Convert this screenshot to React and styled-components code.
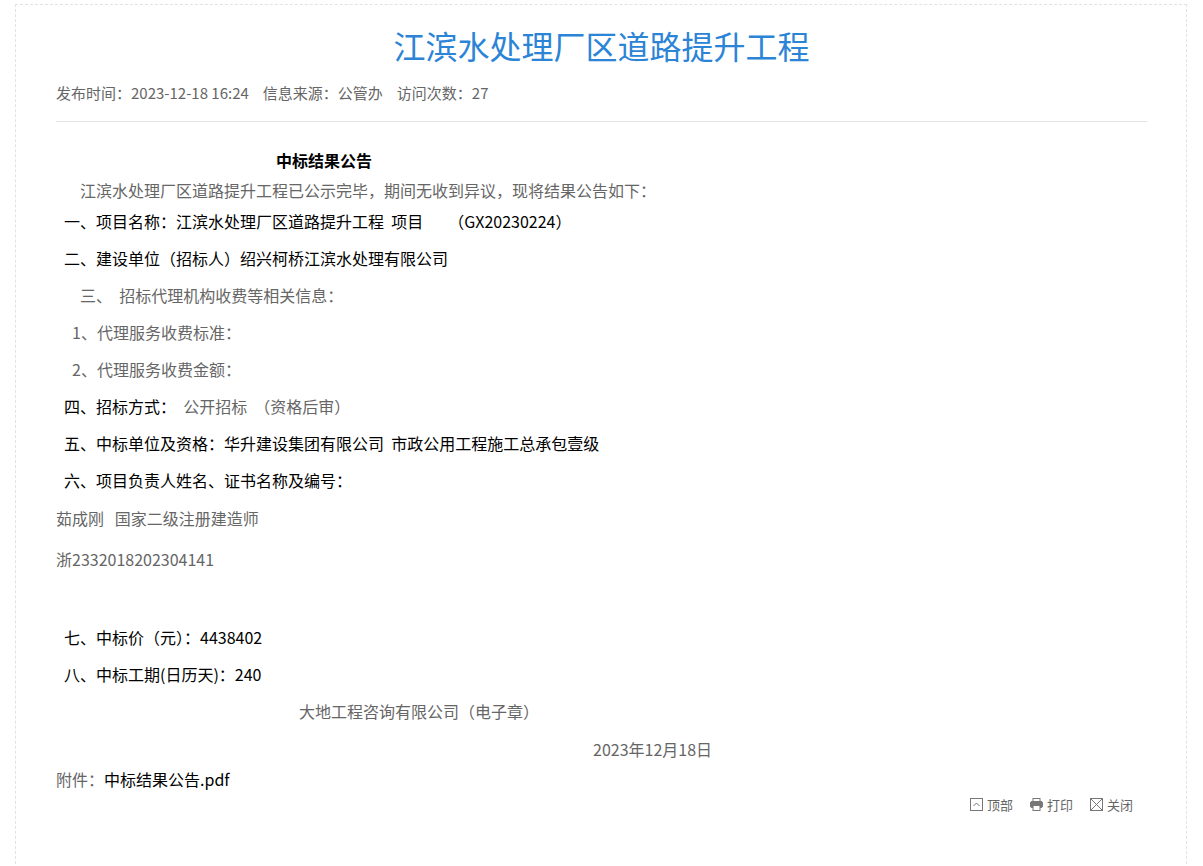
import React from "react";
import styled, { createGlobalStyle } from "styled-components";

const G = createGlobalStyle`
  body { margin: 0; background: #fff; font-family: "Microsoft YaHei", "Noto Sans CJK SC", sans-serif; }
`;
const Frame = styled.div`
  margin: 4px 15px 0 15px; width: 1172px; height: 880px; box-sizing: border-box;
  border: 1px dashed #e2e2e2; padding: 0 39px 0 40px;
`;
const Title = styled.h1`
  margin: 0; padding-top: 20px; text-align: center; font-weight: normal;
  font-size: 32px; line-height: 40px; color: #2b84d6; font-family: "Noto Sans CJK SC", sans-serif;
`;
const Meta = styled.div`
  margin-top: 18px; font-size: 15px; line-height: 20px; color: #666;
  padding-bottom: 18px; border-bottom: 1px solid #e2e2e2;
  font-family: "Noto Sans CJK SC", sans-serif; display: flex; gap: 14px;
`;
const Body = styled.div`
  font-family: "Noto Sans CJK SC", sans-serif; font-size: 16px; color: #666;
`;
const Heading = styled.div`
  height: 24px; padding: 26px 0 6px 220px; line-height: 24px; color: #000; font-weight: 700;
`;
const Line = styled.div`
  height: ${p => p.h || 37}px; line-height: 24px; padding-left: ${p => p.x || 0}px;
  color: ${p => (p.dark ? "#000" : "#666")};
  white-space: pre;
`;
const Dark = styled.span` color: #000; `;
const Tools = styled.div`
  display: flex; justify-content: flex-end; gap: 16px; padding-right: 14px; margin-top: 4px;
  font-size: 13px; color: #666; font-family: "Noto Sans CJK SC", sans-serif;
`;
const Tool = styled.span` display: flex; align-items: center; gap: 3px; `;

const Ico = ({ children }) => (
  <svg width="15" height="15" viewBox="0 0 15 15" fill="none" stroke="#777" strokeWidth="1">{children}</svg>
);

export default function App() {
  return (
    <>
      <G />
      <Frame>
        <Title>江滨水处理厂区道路提升工程</Title>
        <Meta><span>发布时间：2023-12-18 16:24</span><span>信息来源：公管办</span><span>访问次数：27</span></Meta>
        <Body>
          <Heading>中标结果公告</Heading>
          <Line h={31} x={24}>江滨水处理厂区道路提升工程已公示完毕，期间无收到异议，现将结果公告如下：</Line>
          <Line x={8} dark>一、项目名称：江滨水处理厂区道路提升工程  项目       （GX20230224）</Line>
          <Line x={8} dark>二、建设单位（招标人）绍兴柯桥江滨水处理有限公司</Line>
          <Line x={24}>三、  招标代理机构收费等相关信息：</Line>
          <Line x={16}>1、代理服务收费标准：</Line>
          <Line x={16}>2、代理服务收费金额：</Line>
          <Line x={8}><Dark>四、招标方式：</Dark>  公开招标  （资格后审）</Line>
          <Line x={8} dark>五、中标单位及资格：华升建设集团有限公司  市政公用工程施工总承包壹级</Line>
          <Line h={38} x={8} dark>六、项目负责人姓名、证书名称及编号：</Line>
          <Line h={41}>茹成刚   国家二级注册建造师</Line>
          <Line h={78}>浙2332018202304141</Line>
          <Line x={8} dark>七、中标价（元）：4438402</Line>
          <Line x={8} dark>八、中标工期(日历天)：240</Line>
          <Line h={38} x={243}>大地工程咨询有限公司（电子章）</Line>
          <Line h={30} x={537}>2023年12月18日</Line>
          <Line h={24}>附件：<Dark>中标结果公告.pdf</Dark></Line>
        </Body>
        <Tools>
          <Tool><Ico><rect x="1.5" y="1.5" width="12" height="12" /><path d="M4.5 9l3-3 3 3" /></Ico>顶部</Tool>
          <Tool><Ico><rect x="4" y="1.5" width="7" height="3" /><rect x="1.5" y="4.5" width="12" height="6" rx="1.5" fill="#777" /><rect x="4" y="8.5" width="7" height="5" fill="#fff" /></Ico>打印</Tool>
          <Tool><Ico><rect x="1.5" y="1.5" width="12" height="12" /><path d="M1.5 1.5l12 12M13.5 1.5l-12 12" /></Ico>关闭</Tool>
        </Tools>
      </Frame>
    </>
  );
}
